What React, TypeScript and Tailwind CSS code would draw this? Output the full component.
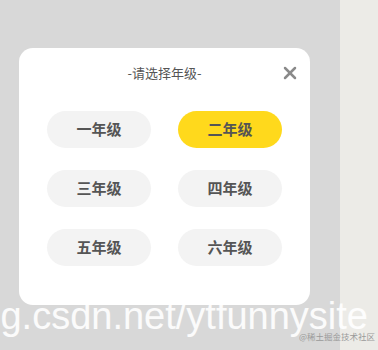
import { X } from "lucide-react";

const grades = ["一年级", "二年级", "三年级", "四年级", "五年级", "六年级"];

export default function App() {
  const selected = "二年级";

  return (
    <div
      className="relative flex h-[350px] w-[378px] overflow-hidden bg-[#d8d8d8]"
      style={{ fontFamily: '"Noto Sans CJK SC", "Noto Sans", sans-serif' }}
    >
      <div className="flex-1 pl-[19px] pt-[48px]">
        <div className="w-[291px] h-[257px] rounded-[14px] bg-white">
          <div className="relative flex h-[50px] items-center justify-center">
            <span className="text-[13px] text-[#555]">-请选择年级-</span>
            <X
              className="absolute right-[10px] top-[15px] h-[20px] w-[20px] text-[#8a8a8a]"
              strokeWidth={3}
            />
          </div>
          <div className="mt-[13px] grid grid-cols-2 gap-x-[27px] gap-y-[22px] px-[28px]">
            {grades.map((g) => (
              <button
                key={g}
                className={
                  g === selected
                    ? "flex h-[37px] items-center justify-center rounded-full bg-[#ffd91c] text-[15px] font-bold text-[#555]"
                    : "flex h-[37px] items-center justify-center rounded-full bg-[#f3f3f3] text-[15px] font-bold text-[#555]"
                }
              >
                {g}
              </button>
            ))}
          </div>
        </div>
      </div>
      <div className="w-[38px] bg-[#ecebe7]" />

      {/* watermark from the screenshot */}
      <div
        className="pointer-events-none absolute right-[10px] top-[297px] whitespace-nowrap text-[38px] leading-none text-white/90"
        style={{ fontFamily: '"Liberation Sans", Arial, sans-serif' }}
      >
        blog.csdn.net/ytfunnysite
      </div>
      <div className="pointer-events-none absolute right-[3px] top-[332px] text-[8.5px] leading-none text-[#9a9a9a]">
        @稀土掘金技术社区
      </div>
    </div>
  );
}
